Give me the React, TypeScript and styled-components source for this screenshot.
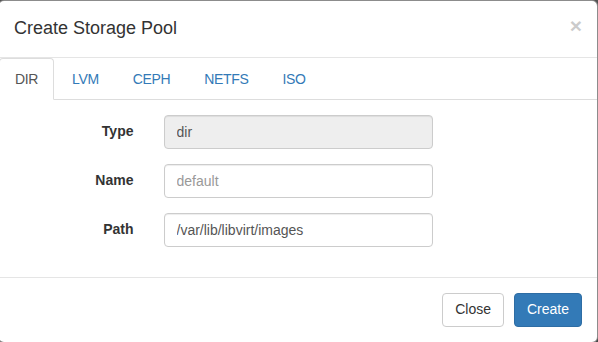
import React, { useState } from 'react';
import styled, { createGlobalStyle } from 'styled-components';

const GlobalStyle = createGlobalStyle`
  html, body {
    margin: 0;
    padding: 0;
    height: 100%;
    overflow: hidden;
    background: #5a5a5a;
  }
  body {
    font-family: "Liberation Sans", Arial, Helvetica, sans-serif;
    font-size: 14px;
    line-height: 1.42857;
    color: #333;
  }
  * {
    box-sizing: border-box;
  }
`;

const Modal = styled.div`
  width: 600px;
  margin-left: -2px;
  background: #fff;
  border: 1px solid rgba(0, 0, 0, 0.45);
  border-radius: 6px;
  box-shadow: 0 5px 15px rgba(0, 0, 0, 0.5);
`;

const Header = styled.div`
  display: flex;
  justify-content: space-between;
  align-items: flex-start;
  padding: 15px;
  border-bottom: 1px solid #e5e5e5;
`;

const Title = styled.h4`
  margin: 0;
  font-size: 18px;
  font-weight: 500;
  line-height: 1.42857;
  color: #333;
`;

const CloseX = styled.button`
  margin-top: -1px;
  padding: 0;
  background: none;
  border: 0;
  font-family: "Liberation Sans", Arial, sans-serif;
  font-size: 21px;
  font-weight: bold;
  line-height: 1;
  color: #000;
  opacity: 0.2;
  cursor: pointer;
`;

const Tabs = styled.ul`
  display: flex;
  margin: 0;
  padding: 0;
  list-style: none;
  border-bottom: 1px solid #ddd;
`;

const TabItem = styled.li`
  margin-bottom: -1px;
`;

const TabLink = styled.a<{ $active: boolean }>`
  display: block;
  margin-right: 2px;
  padding: 10px 15px;
  line-height: 20px;
  letter-spacing: -0.35px;
  border: 1px solid ${p => (p.$active ? '#ddd' : 'transparent')};
  border-bottom-color: transparent;
  border-radius: 4px 4px 0 0;
  background: ${p => (p.$active ? '#fff' : 'transparent')};
  color: ${p => (p.$active ? '#555' : '#337ab7')};
  text-decoration: none;
  cursor: ${p => (p.$active ? 'default' : 'pointer')};
`;

const Body = styled.div`
  padding: 15px 0;
`;

const FormRow = styled.div`
  display: grid;
  grid-template-columns: 149.5px 299px;
  margin-bottom: 15px;
`;

const Label = styled.label`
  padding: 7px 15px 0 15px;
  text-align: right;
  font-weight: bold;
  color: #333;
`;

const InputCol = styled.div`
  padding: 0 15px;
`;

const Input = styled.input<{ $readonly?: boolean }>`
  display: block;
  width: 100%;
  height: 34px;
  padding: 6px 12px;
  font-family: inherit;
  font-size: 14px;
  line-height: 1.42857;
  color: #555;
  background: ${p => (p.$readonly ? '#eee' : '#fff')};
  border: 1px solid #ccc;
  border-radius: 4px;
  box-shadow: inset 0 1px 1px rgba(0, 0, 0, 0.075);
  outline: none;

  &::placeholder {
    color: #999;
  }
`;

const Footer = styled.div`
  display: flex;
  justify-content: flex-end;
  gap: 10px;
  padding: 15px;
  border-top: 1px solid #e5e5e5;
`;

const Button = styled.button<{ $primary?: boolean }>`
  height: 34px;
  padding: 6px 12px;
  font-family: inherit;
  font-size: 14px;
  line-height: 1.42857;
  border-radius: 4px;
  border: 1px solid ${p => (p.$primary ? '#2e6da4' : '#ccc')};
  background: ${p => (p.$primary ? '#337ab7' : '#fff')};
  color: ${p => (p.$primary ? '#fff' : '#333')};
  cursor: pointer;
`;

const tabs = ['DIR', 'LVM', 'CEPH', 'NETFS', 'ISO'];

export default function App() {
  const [active, setActive] = useState('DIR');
  const [name, setName] = useState('');
  const [path, setPath] = useState('/var/lib/libvirt/images');

  return (
    <>
      <GlobalStyle />
      <Modal>
        <Header>
          <Title>Create Storage Pool</Title>
          <CloseX>×</CloseX>
        </Header>

        <Tabs>
          {tabs.map(t => (
            <TabItem key={t}>
              <TabLink $active={active === t} onClick={() => setActive(t)}>
                {t}
              </TabLink>
            </TabItem>
          ))}
        </Tabs>

        <Body>
          <FormRow>
            <Label>Type</Label>
            <InputCol>
              <Input $readonly readOnly value="dir" />
            </InputCol>
          </FormRow>
          <FormRow>
            <Label>Name</Label>
            <InputCol>
              <Input
                placeholder="default"
                value={name}
                onChange={e => setName(e.target.value)}
              />
            </InputCol>
          </FormRow>
          <FormRow>
            <Label>Path</Label>
            <InputCol>
              <Input value={path} onChange={e => setPath(e.target.value)} />
            </InputCol>
          </FormRow>
        </Body>

        <Footer>
          <Button>Close</Button>
          <Button $primary>Create</Button>
        </Footer>
      </Modal>
    </>
  );
}
